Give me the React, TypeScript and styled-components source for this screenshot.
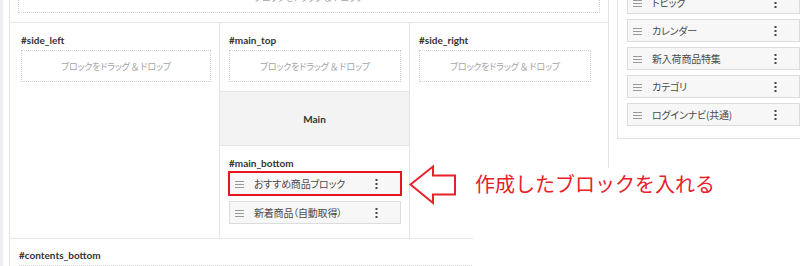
import React from 'react';
import styled, { createGlobalStyle } from 'styled-components';

const GlobalStyle = createGlobalStyle`
  html, body {
    margin: 0;
    padding: 0;
    background: #fff;
    overflow: hidden;
  }
  body {
    font-family: 'Noto Sans CJK JP', 'Noto Sans', sans-serif;
    color: #333;
  }
`;

const Screen = styled.div`
  position: relative;
  width: 800px;
  height: 266px;
  overflow: hidden;
`;

// the page is scrolled a bit, so the content starts above the window
const Scroller = styled.div`
  display: flex;
  align-items: flex-start;
  margin-top: -27px;
`;

const Strip = styled.div`
  flex: 0 0 3px;
  align-self: stretch;
  height: 320px;
  background: #edeef2;
  margin-right: 6px;
`;

const Frame = styled.div`
  flex: 0 0 600px;
  box-sizing: border-box;
  border-left: 1px solid #e4e4e4;
  border-right: 1px solid #e4e4e4;
`;

const TopArea = styled.div`
  padding: 8px 8px 9px;
  border-bottom: 1px solid #e6e6e6;
`;

const Row = styled.div`
  display: grid;
  grid-template-columns: 210px 190px 198px;
`;

const Column = styled.div<{ $pl: number; $pr: number; $border?: boolean }>`
  padding: 10px ${({ $pr }) => $pr}px 0 ${({ $pl }) => $pl}px;
  border-right: ${({ $border }) => ($border ? '1px solid #e4e4e4' : 'none')};
`;

const MainColumn = styled.div`
  display: flex;
  flex-direction: column;
  border-right: 1px solid #e4e4e4;
`;

const Section = styled.div<{ $pt: number; $pb: number }>`
  padding: ${({ $pt }) => $pt}px 8px ${({ $pb }) => $pb}px 9px;
`;

const Label = styled.div<{ $mb?: number }>`
  height: 14px;
  line-height: 14px;
  font-family: Lato, 'Noto Sans', sans-serif;
  font-size: 10px;
  font-weight: 700;
  color: #333;
  margin-bottom: ${({ $mb }) => $mb ?? 3}px;
`;

const DropZone = styled.div`
  height: 32px;
  box-sizing: border-box;
  border: 1px dotted #cfcfcf;
  display: flex;
  align-items: center;
  justify-content: center;
  font-size: 9px;
  color: #a4a4a4;
  font-feature-settings: 'palt';
  letter-spacing: -0.2px;
`;

const Amp = styled.span`
  font-feature-settings: normal;
  margin: 0 1px;
`;

const MainBox = styled.div`
  height: 55px;
  box-sizing: border-box;
  background: #f3f3f3;
  border-top: 1px solid #e4e4e4;
  border-bottom: 1px solid #e4e4e4;
  display: flex;
  align-items: center;
  justify-content: center;
  font-family: Lato, 'Noto Sans', sans-serif;
  font-size: 10px;
  font-weight: 700;
  color: #333;
`;

const ItemList = styled.div<{ $gap: number }>`
  display: flex;
  flex-direction: column;
  gap: ${({ $gap }) => $gap}px;
`;

const Item = styled.div<{ $marked?: boolean }>`
  height: 23px;
  box-sizing: border-box;
  display: flex;
  align-items: center;
  padding-left: 5px;
  background: #f7f7f7;
  border: 1px solid #dcdcdc;
  outline: ${({ $marked }) => ($marked ? '2px solid #e8141f' : 'none')};
  outline-offset: -1px;
`;

const ItemName = styled.span`
  flex: 1;
  margin-left: 10px;
  font-size: 10px;
  color: #4a4a4a;
  letter-spacing: -0.2px;
  font-feature-settings: 'palt';
  white-space: nowrap;
`;

const Kebab = styled.svg`
  flex: 0 0 auto;
  margin-right: 22px;
`;

const BottomArea = styled.div`
  padding: 9px 8px 0 9px;
  border-top: 1px solid #e6e6e6;
`;

const Panel = styled.div`
  flex: 0 0 193px;
  box-sizing: border-box;
  margin-left: 8px;
  padding: 17px 9px 12px;
  border: 1px solid #e4e4e4;
`;

const Note = styled.div`
  position: absolute;
  left: 473px;
  top: 168px;
  right: 0;
  bottom: 0;
  background: #fff;
  padding: 4px 0 0 2px;
  font-size: 20px;
  line-height: 24px;
  color: #e8202a;
  white-space: nowrap;
`;

const Arrow = styled.svg`
  position: absolute;
  left: 408px;
  top: 164px;
`;

function Grip(): JSX.Element {
  return (
    <svg width="9" height="8" viewBox="0 0 9 8">
      <g stroke="#9a9a9a" strokeWidth="1">
        <line x1="0" y1="1.5" x2="9" y2="1.5" />
        <line x1="0" y1="4.5" x2="9" y2="4.5" />
        <line x1="0" y1="7.5" x2="9" y2="7.5" />
      </g>
    </svg>
  );
}

function BlockItem({ name, marked }: { name: string; marked?: boolean }): JSX.Element {
  return (
    <Item $marked={marked}>
      <Grip />
      <ItemName>{name}</ItemName>
      <Kebab width="3" height="10" viewBox="0 0 3 10">
        <g fill="#444">
          <rect x="0.5" y="0" width="2" height="2" />
          <rect x="0.5" y="4" width="2" height="2" />
          <rect x="0.5" y="8" width="2" height="2" />
        </g>
      </Kebab>
    </Item>
  );
}

function Drop(): JSX.Element {
  return (
    <DropZone>
      ブロックをドラッグ<Amp>＆</Amp>ドロップ
    </DropZone>
  );
}

const panelBlocks = ['トピック', 'カレンダー', '新入荷商品特集', 'カテゴリ', 'ログインナビ(共通)'];

export default function App(): JSX.Element {
  return (
    <Screen>
      <GlobalStyle />
      <Scroller>
        <Strip />
        <Frame>
          <TopArea>
            <Drop />
          </TopArea>
          <Row>
            <Column $pl={11} $pr={8} $border>
              <Label>#side_left</Label>
              <Drop />
            </Column>
            <MainColumn>
              <Section $pt={10} $pb={9}>
                <Label>#main_top</Label>
                <Drop />
              </Section>
              <MainBox>Main</MainBox>
              <Section $pt={10} $pb={14}>
                <Label $mb={2}>#main_bottom</Label>
                <ItemList $gap={6}>
                  <BlockItem name="おすすめ商品ブロック" marked />
                  <BlockItem name="新着商品（自動取得）" />
                </ItemList>
              </Section>
            </MainColumn>
            <Column $pl={9} $pr={17}>
              <Label>#side_right</Label>
              <Drop />
            </Column>
          </Row>
          <BottomArea>
            <Label>#contents_bottom</Label>
            <Drop />
          </BottomArea>
        </Frame>
        <Panel>
          <ItemList $gap={5}>
            {panelBlocks.map((b) => (
              <BlockItem key={b} name={b} />
            ))}
          </ItemList>
        </Panel>
      </Scroller>
      <Arrow width="50" height="42" viewBox="0 0 50 42">
        <path
          d="M2.5 20.5 L25 2.5 L25 11.5 L47 11.5 L47 30.5 L25 30.5 L25 39 Z"
          fill="#fff"
          stroke="#e8202a"
          strokeWidth="2"
          strokeLinejoin="miter"
        />
      </Arrow>
      <Note>作成したブロックを入れる</Note>
    </Screen>
  );
}
